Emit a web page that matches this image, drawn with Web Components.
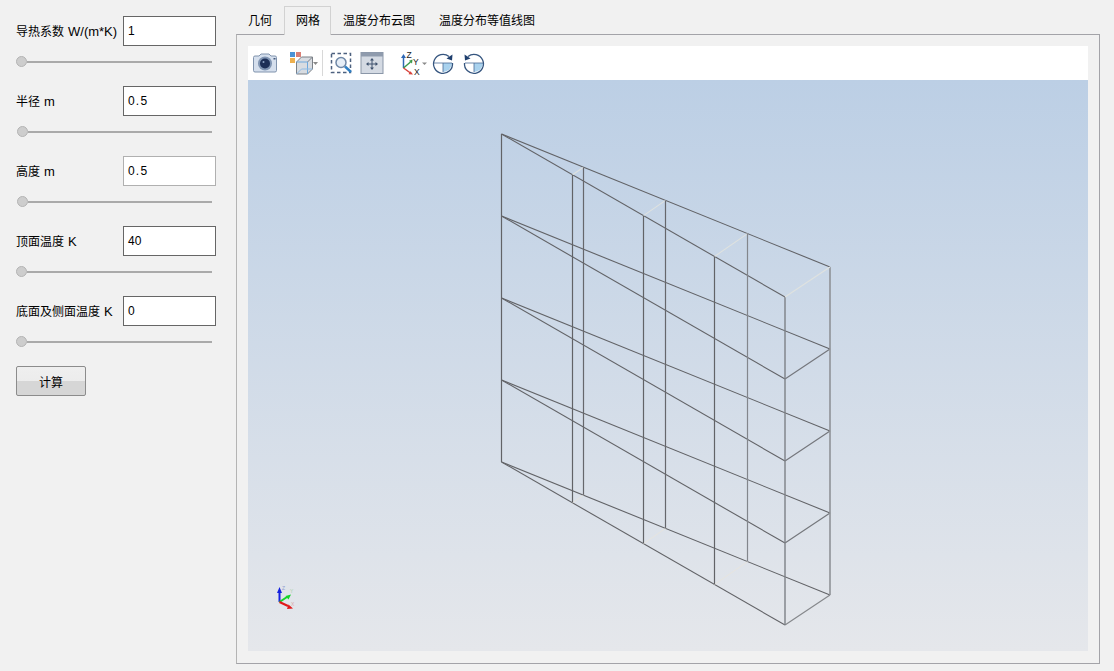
<!DOCTYPE html>
<html>
<head>
<meta charset="utf-8">
<style>
  html, body { margin: 0; height: 100%; }
  body {
    background: #f1f1f1;
    color: #000;
    font: 12px "Liberation Sans", "Noto Sans CJK SC", sans-serif;
    overflow: hidden;
  }
</style>
</head>
<body>
<app-window>
  <param-row slot="side" label="导热系数 W/(m*K)" value="1"></param-row>
  <param-row slot="side" label="半径 m" value="0.5" nudge></param-row>
  <param-row slot="side" label="高度 m" value="0.5" nudge muted></param-row>
  <param-row slot="side" label="顶面温度 K" value="40"></param-row>
  <param-row slot="side" label="底面及侧面温度 K" value="0"></param-row>
  <calc-button slot="side">计算</calc-button>
  <tab-bar slot="tabs" items="几何,网格,温度分布云图,温度分布等值线图" selected="1"></tab-bar>
  <view-toolbar slot="pane"></view-toolbar>
  <mesh-view slot="pane"></mesh-view>
</app-window>

<script>
// Outer frame: parameter column on the left, tabs and pane on the right
class AppWindow extends HTMLElement {
  constructor() {
    super();
    this.attachShadow({ mode: "open" }).innerHTML = `
      <style>
        :host { display: grid; grid-template-columns: 236px 1fr; width: 1114px; height: 671px; box-sizing: border-box; }
        .side { display: flex; flex-direction: column; padding: 16px 20px 0 16px; }
        .main { display: flex; flex-direction: column; padding: 6px 14px 7px 0; min-width: 0; }
        .pane {
          flex: 1; display: flex; flex-direction: column; min-height: 0;
          border: 1px solid #a3a3a8; border-left-color: #b4b4b4; padding: 11px 11px 12px;
        }
      </style>
      <div class="side"><slot name="side"></slot></div>
      <div class="main">
        <slot name="tabs"></slot>
        <div class="pane"><slot name="pane"></slot></div>
      </div>`;
  }
}

class ParamRow extends HTMLElement {
  constructor() {
    super();
    this.attachShadow({ mode: "open" });
  }
  connectedCallback() {
    const value = this.getAttribute("value");
    const spaced = value.includes(".") ? "spaced" : "";
    const [name, unit] = this.getAttribute("label").split(" ");
    this.shadowRoot.innerHTML = `
      <style>
        :host { display: block; height: 70px; }
        .top { display: flex; align-items: center; justify-content: space-between; height: 30px; }
        .label { white-space: nowrap; line-height: 30px; padding-top: 1px; }
        .unit { font-size: 13px; margin-left: 4px; }
        .box {
          width: 93px; height: 30px; box-sizing: border-box; background: #fff;
          border: 1px solid ${this.hasAttribute("muted") ? "#b0b0b0" : "#666"};
          padding-left: 4px; line-height: 28px;
        }
        .spaced { letter-spacing: 1.2px; }
        .slider { display: flex; align-items: center; height: 11px; margin-top: 10px; width: 196px; }
        .thumb {
          width: 11px; height: 11px; box-sizing: border-box; border-radius: 50%;
          background: #cdcdcd; border: 1px solid #b4b4b4; flex: none;
          margin-left: ${this.hasAttribute("nudge") ? 1 : 0}px;
        }
        .track { flex: 1; height: 2px; background: #aaa; }
      </style>
      <div class="top">
        <span class="label">${name}<span class="unit">${unit}</span></span>
        <div class="box ${spaced}">${value}</div>
      </div>
      <div class="slider"><div class="thumb"></div><div class="track"></div></div>`;
  }
}

class CalcButton extends HTMLElement {
  constructor() {
    super();
    this.attachShadow({ mode: "open" }).innerHTML = `
      <style>
        :host {
          display: flex; align-items: center; justify-content: center;
          width: 70px; height: 30px; box-sizing: border-box; border-radius: 2px;
          border: 1px solid #8c8c8c;
          background: linear-gradient(#efefef 0, #ececec 50%, #d6d6d6 50%, #d6d6d6 100%);
        }
      </style>
      <slot></slot>`;
  }
}

class TabBar extends HTMLElement {
  constructor() {
    super();
    this.attachShadow({ mode: "open" });
  }
  connectedCallback() {
    const selected = Number(this.getAttribute("selected"));
    const items = this.getAttribute("items").split(",");
    this.shadowRoot.innerHTML = `
      <style>
        :host { display: flex; height: 28px; position: relative; z-index: 1; }
        .tab { padding: 0 12px; line-height: 30px; height: 28px; white-space: nowrap; box-sizing: border-box; }
        .on {
          height: 29px; padding: 0 10px 0 11px; background: #f1f1f1;
          border: 1px solid #d2d2d2; border-bottom: none; line-height: 29px;
        }
      </style>
      ${items.map((t, i) => `<div class="tab ${i === selected ? "on" : ""}">${t}</div>`).join("")}`;
  }
}

class ViewToolbar extends HTMLElement {
  constructor() {
    super();
    this.attachShadow({ mode: "open" }).innerHTML = `
      <style>
        :host { display: flex; align-items: center; height: 34px; background: #fff; flex: none; }
        svg { display: block; flex: none; }
      </style>
      <!-- camera -->
      <svg width="26" height="22" viewBox="0 0 26 22" style="margin-left:4px">
        <path d="M3 4h4l2-2h8l2 2h4a1.500 1.500 0 0 1 1.500 1.500v13a1.500 1.500 0 0 1-1.500 1.500H3a1.500 1.500 0 0 1-1.500-1.500v-13A1.500 1.500 0 0 1 3 4z" fill="#d5dfed" stroke="#8093ad"/>
        <circle cx="13" cy="11.500" r="7" fill="#7f94b2"/>
        <circle cx="13" cy="11.500" r="5" fill="#1d2f57"/>
        <circle cx="11.500" cy="10" r="1" fill="#8ea3c4"/>
        <rect x="21.500" y="6" width="2" height="1.500" fill="#44597c"/>
      </svg>
      <!-- representation cube -->
      <svg width="30" height="26" viewBox="0 0 30 26" style="margin-left:11px">
        <rect x="1" y="2" width="5" height="5" fill="#4b93d6"/>
        <rect x="7" y="2" width="5" height="5" fill="#d97f76"/>
        <rect x="1" y="8" width="5" height="5" fill="#eeb04e"/>
        <path d="M7.500 12l5-5h11v12l-5 5h-11z" fill="#d8dce1" stroke="#7b8087"/>
        <path d="M7.500 12h11v12" fill="none" stroke="#6ea8dc"/>
        <path d="M18.500 12l5-5" stroke="#7b8087"/>
        <path d="M7.500 24l5-5h11" fill="none" stroke="#8fbce6"/>
        <path d="M24 12h5l-2.500 3z" fill="#8a8a8a"/>
      </svg>
      <div style="width:1px;height:26px;background:#d8d8d8;margin-left:3px"></div>
      <!-- zoom to box -->
      <svg width="24" height="24" viewBox="0 0 24 24" style="margin-left:7px">
        <rect x="1.500" y="2.500" width="19" height="19" fill="none" stroke="#4d617f" stroke-width="1.500" stroke-dasharray="3.500 2.500"/>
        <circle cx="11" cy="11.500" r="5" fill="#e6eef7" stroke="#6f87a6" stroke-width="1.500"/>
        <path d="M15 15.500l6 5.500" stroke="#2f7fc4" stroke-width="2.500"/>
      </svg>
      <!-- reset view -->
      <svg width="24" height="24" viewBox="0 0 24 24" style="margin-left:6px">
        <rect x="1" y="1.500" width="22" height="21" fill="#d4dae3" stroke="#8b97a8"/>
        <rect x="1" y="1.500" width="22" height="4" fill="#8f9bad"/>
        <path d="M12 8v10M7 13h10" stroke="#3f526f"/>
        <path d="M12 7l2 2.500h-4zM12 19l2-2.500h-4zM6 13l2.500-2v4zM18 13l-2.500-2v4z" fill="#3f526f"/>
      </svg>
      <!-- axes -->
      <svg width="28" height="26" viewBox="0 0 28 26" style="margin-left:16px">
        <path d="M3.500 18V7" stroke="#2f68b5" stroke-width="1.500"/>
        <path d="M3.500 4l2.500 4H1z" fill="#2f68b5"/>
        <path d="M3.500 18l7-6" stroke="#3b9a4a" stroke-width="1.500"/>
        <path d="M12.500 9.500l-.5 4-3-2.800z" fill="#3b9a4a"/>
        <path d="M3.500 18l7 5" stroke="#d9433c" stroke-width="1.500"/>
        <path d="M13 24.500l-4.500-.300 2-3z" fill="#d9433c"/>
        <text x="6.500" y="7.500" font-size="8.500" fill="#222">Z</text>
        <text x="13" y="15" font-size="8.500" fill="#222">Y</text>
        <text x="14" y="24.500" font-size="8.500" fill="#222">X</text>
        <path d="M22 12.500h5l-2.500 2.500z" fill="#8a8a8a"/>
      </svg>
      <!-- rotate right -->
      <svg width="24" height="24" viewBox="0 0 24 24" style="margin-left:3px">
        <path d="M12 12h9a9 9 0 0 1-9 9z" fill="#a9d2ee"/>
        <path d="M3 12h18M12 12v9" stroke="#4a6a94" stroke-width=".8" fill="none"/>
        <path d="M18 5.500A9.500 9.500 0 1 0 21.500 12" fill="none" stroke="#35557f" stroke-width="1.300"/>
        <path d="M21.500 3.500l-.5 6-5.500-2z" fill="#1f3f6e"/>
      </svg>
      <!-- rotate left -->
      <svg width="24" height="24" viewBox="0 0 24 24" style="margin-left:7px">
        <path d="M12 12h9a9 9 0 0 1-9 9z" fill="#a9d2ee"/>
        <path d="M3 12h18M12 12v9" stroke="#4a6a94" stroke-width=".8" fill="none"/>
        <path d="M6 5.500A9.500 9.500 0 1 1 2.500 12" fill="none" stroke="#35557f" stroke-width="1.300"/>
        <path d="M2.500 3.500l.5 6 5.500-2z" fill="#1f3f6e"/>
      </svg>`;
  }
}

// Wireframe plus corner triad; the svg viewBox uses page coordinates
class MeshView extends HTMLElement {
  constructor() {
    super();
    this.attachShadow({ mode: "open" });
  }
  connectedCallback() {
    const line = (x1, y1, x2, y2, color, width) =>
      `<line x1="${x1}" y1="${y1}" x2="${x2}" y2="${y2}" stroke="${color}" stroke-width="${width || 1.1}"/>`;
    const dark = "#626367";
    const left = 501.5, back = 830, front = 785;
    let lines = "";

    // one fan of edges per level
    [134, 216, 298, 380, 462].forEach((y, i) => {
      lines += line(left, y, back, y + 133, dark);
      lines += line(left, y, front, y + 163, dark);
      if (i > 0) lines += line(front, y + 163, back, y + 133, i === 4 ? "#85878b" : "#74767b");
    });

    lines += line(left, 134, left, 462, dark, 1.2);
    lines += line(front, 297, front, 625, "#7d8086", 1.4);
    lines += line(back, 267, back, 595, "#8f9297", 1.6);

    // inner verticals, each with its pale link at top and bottom
    [[572.5, 583.5], [643.5, 665.5], [714.5, 747.5]].forEach(([fx, bx]) => {
      const fy = 134 + (fx - left) / (front - left) * 163;
      const by = 134 + (bx - left) / (back - left) * 133;
      lines += line(fx, fy, bx, by, "#dfe2df");
      lines += line(bx, by, bx, by + 328, bx > 700 ? "#83868c" : "#66676c", 1.2);
      lines += line(fx, fy, fx, fy + 328, dark, 1.2);
      lines += line(fx, fy + 328, bx, by + 328, "#e8e4dc", 0.8);
    });
    lines += line(front, 297, back, 267, "#dfe2df");

    this.shadowRoot.innerHTML = `
      <style>
        :host { display: block; flex: 1; min-height: 0; background: linear-gradient(#bccfe5, #e5e7eb); }
        svg { display: block; width: 100%; height: 100%; }
      </style>
      <svg viewBox="248 80 840 571">
        ${lines}
        <g stroke-width="2">
          <line x1="279.5" y1="602" x2="279.5" y2="592" stroke="#1420e0"/>
          <path d="M279.500 587l2.500 6h-5z" fill="#1420e0"/>
          <line x1="279.500" y1="602" x2="287" y2="597" stroke="#16d42a"/>
          <path d="M291 594.500l-2.500 5-3-3.500z" fill="#16d42a"/>
          <line x1="279.500" y1="602" x2="288" y2="606" stroke="#e01818"/>
          <path d="M293 608.500l-6 .5 1.500-4.500z" fill="#e01818"/>
        </g>
        <text x="282" y="590" font-size="5" fill="#8f9fd0">Z</text>
        <text x="290" y="593" font-size="5" fill="#a8cfa8">Y</text>
        <text x="291" y="606" font-size="5" fill="#d8a8a8">X</text>
      </svg>`;
  }
}

customElements.define("app-window", AppWindow);
customElements.define("param-row", ParamRow);
customElements.define("calc-button", CalcButton);
customElements.define("tab-bar", TabBar);
customElements.define("view-toolbar", ViewToolbar);
customElements.define("mesh-view", MeshView);
</script>
</body>
</html>
